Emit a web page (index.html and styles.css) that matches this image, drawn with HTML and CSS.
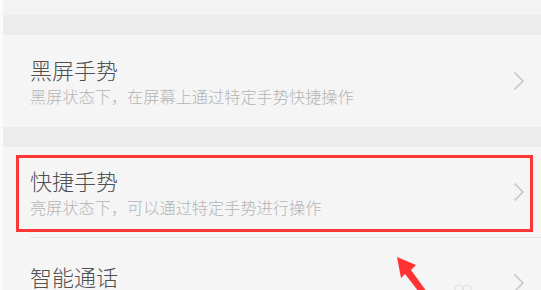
FILE: index.html
```html
<!DOCTYPE html>
<html lang="zh-CN">
<head>
<meta charset="utf-8">
<link rel="stylesheet" href="styles.css">
</head>
<body>
<div class="page">
  <div class="top-band"></div>
  <div class="gap"></div>
  <div class="card">
    <div class="row">
      <div class="texts">
        <div class="title">黑屏手势</div>
        <div class="sub">黑屏状态下，在屏幕上通过特定手势快捷操作</div>
      </div>
      <svg class="chev" width="12" height="20" viewBox="0 0 12 20"><path d="M1.5 1.5 L10 10 L1.5 18.5" fill="none" stroke="#c6c6c6" stroke-width="1.5"/></svg>
    </div>
  </div>
  <div class="gap"></div>
  <div class="card">
    <div class="row row2">
      <div class="texts">
        <div class="title">快捷手势</div>
        <div class="sub">亮屏状态下，可以通过特定手势进行操作</div>
      </div>
      <svg class="chev" width="12" height="20" viewBox="0 0 12 20"><path d="M1.5 1.5 L10 10 L1.5 18.5" fill="none" stroke="#c6c6c6" stroke-width="1.5"/></svg>
    </div>
    <div class="divider"></div>
    <div class="row row3">
      <div class="texts">
        <div class="title">智能通话</div>
      </div>
      <svg class="chev" width="12" height="20" viewBox="0 0 12 20"><path d="M1.5 1.5 L10 10 L1.5 18.5" fill="none" stroke="#c6c6c6" stroke-width="1.5"/></svg>
    </div>
  </div>
  <div class="highlight"></div>
  <svg class="arrow" width="541" height="290" viewBox="0 0 541 290">
    <circle cx="459" cy="289" r="4" fill="none" stroke="#e0e0e0" stroke-width="1.2"/>
    <circle cx="467" cy="289" r="4" fill="none" stroke="#e0e0e0" stroke-width="1.2"/>
    <polygon points="397,257 416,265 411,270 427,292 419,292 405,274 401,278" fill="#ff3333"/>
  </svg>
</div>
</body>
</html>
```
FILE: styles.css
```css
html, body {
  margin: 0;
  padding: 0;
  background: #fbfbfb;
  overflow: hidden;
}
.page {
  position: relative;
  margin-left: 3px;
  width: 538px;
  height: 290px;
  background: #ececec;
  font-family: "Noto Sans CJK SC", "Noto Sans", sans-serif;
  overflow: hidden;
}
.top-band {
  height: 15px;
  background: #f3f3f3;
}
.gap {
  height: 20px;
}
.card {
  background: #f5f5f5;
}
.row {
  height: 92px;
  display: flex;
  align-items: center;
  padding-left: 27px;
  padding-right: 16px;
  box-sizing: border-box;
}
.row2 {
  height: 90px;
}
.row3 {
  height: 90px;
  align-items: flex-start;
}
.row3 .texts {
  padding-top: 24px;
}
.row3 .chev {
  margin-top: 35px;
}
.texts {
  flex: 1;
  display: flex;
  flex-direction: column;
  gap: 2px;
}
.title {
  font-size: 22px;
  line-height: 28px;
  font-weight: 300;
  color: #505050;
}
.sub {
  font-size: 16.2px;
  line-height: 22px;
  font-weight: 300;
  color: #b4b4b4;
}
.chev {
  display: block;
}
.divider {
  height: 1px;
  margin-left: 27px;
  background: #e4e4e4;
}
.highlight {
  position: absolute;
  left: 13px;
  top: 155px;
  width: 517px;
  height: 77px;
  border: 3px solid #ff3636;
  box-sizing: border-box;
}
.arrow {
  position: absolute;
  left: -3px;
  top: 0;
}
```
